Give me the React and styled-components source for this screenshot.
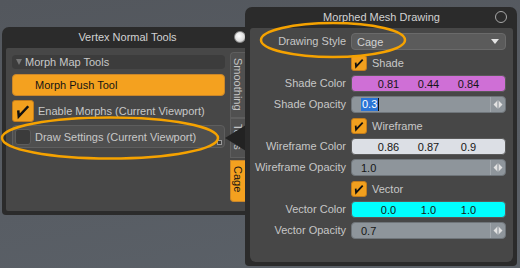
import React from "react";
import styled, { createGlobalStyle } from "styled-components";

const Global = createGlobalStyle`
  body {
    margin: 0;
    font-family: "Liberation Sans", Arial, sans-serif;
    font-size: 11px;
  }
`;

const Desktop = styled.div`
  position: relative;
  width: 520px;
  height: 268px;
  overflow: hidden;
  background: linear-gradient(170deg, #53575d 0%, #585d64 60%, #5b6168 100%);
`;

const Window = styled.div`
  position: absolute;
  left: ${(p) => p.$x}px;
  top: ${(p) => p.$y}px;
  width: ${(p) => p.$w}px;
  height: ${(p) => p.$h}px;
  box-sizing: border-box;
  display: flex;
  flex-direction: column;
  background: #2b2b2b;
  border-radius: 7px 7px 4px 4px;
  padding: 0 ${(p) => p.$pr}px 4px ${(p) => p.$pl}px;
`;

const TitleBar = styled.div`
  position: relative;
  height: 21px;
  flex: none;
  line-height: 21px;
  text-align: center;
  color: #d2d2d2;
  font-size: 11px;
`;

const RadioDot = styled.span`
  position: absolute;
  top: 4px;
  right: ${(p) => p.$right}px;
  width: 12px;
  height: 12px;
  box-sizing: border-box;
  border-radius: 50%;
  background: ${(p) => (p.$filled ? "radial-gradient(circle at 40% 40%, #ffffff, #dcdcdc 60%, #9a9a9a)" : "transparent")};
  border: ${(p) => (p.$filled ? "1px solid #888" : "1.5px solid #a8a8a8")};
`;

const LeftBody = styled.div`
  flex: 1;
  display: flex;
  gap: 5px;
  background: #474747;
  border-radius: 2px;
  padding: 4px 0 0 6px;
`;

const Content = styled.div`
  width: 213px;
  margin-top: 3px;
  display: flex;
  flex-direction: column;
`;

const SectionHeader = styled.div`
  height: 14px;
  display: flex;
  align-items: center;
  gap: 3px;
  padding-left: 4px;
  background: #3c3c3c;
  border-radius: 4px;
  color: #c8c8c8;
  font-size: 11px;
`;

const Caret = styled.span`
  width: 0;
  height: 0;
  border-left: 3.5px solid transparent;
  border-right: 3.5px solid transparent;
  border-top: 6px solid #767676;
`;

const ToolButton = styled.div`
  margin-top: 5px;
  height: 22px;
  box-sizing: border-box;
  display: flex;
  align-items: center;
  padding-left: 22px;
  background: #f4a11f;
  border: 1px solid #c9862a;
  border-radius: 4px;
  color: #141414;
  font-size: 11px;
`;

const CheckRow = styled.div`
  margin-top: ${(p) => p.$mt}px;
  height: ${(p) => p.$h}px;
  box-sizing: border-box;
  display: flex;
  align-items: center;
  gap: 4px;
  color: #c8c8c8;
  font-size: 11px;
  ${(p) =>
    p.$framed &&
    `
    position: relative;
    padding-left: 2px;
    background: #4f4f4f;
    border: 1px solid #5e5e5e;
    border-radius: 4px;
  `}
`;

const Grip = styled.span`
  position: absolute;
  right: 2px;
  bottom: 2px;
  width: 3px;
  height: 3px;
  border: 1px solid #9a9a9a;
  background: #3a3a3a;
`;

const Box = styled.span`
  flex: none;
  width: ${(p) => p.$size}px;
  height: ${(p) => p.$size}px;
  box-sizing: border-box;
  border-radius: 3px;
  display: flex;
  align-items: center;
  justify-content: center;
  background: ${(p) => (p.$on ? "#f2a01e" : "#3b3b3b")};
  border: 1px solid ${(p) => (p.$on ? "#c27c1c" : "#5c5c5c")};
`;

const TabColumn = styled.div`
  width: 15px;
  display: flex;
  flex-direction: column;
`;

const Tab = styled.div`
  height: ${(p) => p.$h}px;
  margin-top: ${(p) => p.$mt || 0}px;
  box-sizing: border-box;
  writing-mode: vertical-rl;
  display: flex;
  align-items: center;
  justify-content: flex-start;
  padding-top: 5px;
  font-size: 11px;
  background: ${(p) => (p.$active ? "#f4a11f" : "#505050")};
  color: ${(p) => (p.$active ? "#141414" : "#c4c4c4")};
  border: 1px solid ${(p) => (p.$active ? "#c9862a" : "#5e5e5e")};
  border-right: none;
  border-radius: ${(p) => p.$radius};
`;

const RightBody = styled.div`
  flex: 1;
  background: #474747;
  border-radius: 3px 3px 6px 6px;
  padding-top: 5px;
  display: grid;
  grid-template-columns: 96px 155px;
  grid-auto-rows: 17px;
  column-gap: 5px;
  row-gap: 4px;
`;

const Label = styled.div`
  text-align: right;
  line-height: 17px;
  color: #c6c6c6;
  font-size: 11px;
  white-space: nowrap;
`;

const Field = styled.div`
  height: 17px;
  box-sizing: border-box;
  border-radius: 4px;
  border: 1px solid ${(p) => p.$border || "#3a3a3a"};
  background: ${(p) => p.$bg};
  display: flex;
  align-items: center;
  color: ${(p) => p.$color || "#161616"};
  font-size: 11px;
  overflow: hidden;
`;

const Select = styled(Field)`
  justify-content: space-between;
  padding: 0 6px 0 5px;
`;

const DropArrow = styled.span`
  width: 0;
  height: 0;
  border-left: 4px solid transparent;
  border-right: 4px solid transparent;
  border-top: 5px solid #e4e4e4;
`;

const Triple = styled(Field)`
  display: grid;
  grid-template-columns: repeat(3, 40px);
  justify-content: center;
  text-align: center;
`;

const Value = styled.div`
  flex: 1;
  padding-left: 9px;
  display: flex;
  align-items: center;
`;

const Selected = styled.span`
  background: #2a74d6;
  color: #ffffff;
  line-height: 13px;
  padding: 0 1px;
`;

const Caret2 = styled.span`
  width: 1px;
  height: 13px;
  background: #111;
`;

const Spinner = styled.div`
  width: 14px;
  height: 100%;
  border-left: 1px solid #a2a8ad;
  display: flex;
  align-items: center;
  justify-content: center;
`;

const CheckField = styled.div`
  display: flex;
  align-items: center;
  gap: 5px;
  color: #c8c8c8;
  font-size: 11px;
`;

const Overlay = styled.svg`
  position: absolute;
  left: 0;
  top: 0;
  pointer-events: none;
`;

const Tick = ({ size }) => (
  <svg width={size} height={size} viewBox="0 0 16 16">
    <path d="M4.2 7.5 L4.6 12.2 L12.2 4.2" fill="none" stroke="#111" strokeWidth="2" strokeLinejoin="miter" />
  </svg>
);

const Check = ({ size = 16, on = true }) => (
  <Box $size={size} $on={on}>
    {on && <Tick size={size - 2} />}
  </Box>
);

const Spin = () => (
  <Spinner>
    <svg width="10" height="9" viewBox="0 0 10 9">
      <path d="M4 1 L0.5 4.5 L4 8 Z M6 1 L9.5 4.5 L6 8 Z" fill="#e2e2e2" />
      <rect x="4.6" y="0.5" width="0.8" height="8" fill="#e2e2e2" />
    </svg>
  </Spinner>
);

const Opacity = ({ value, selected }) => (
  <Field $bg="#8e959b" $border="#6f757a">
    <Value>
      {selected ? (
        <>
          <Selected>{value}</Selected>
          <Caret2 />
        </>
      ) : (
        value
      )}
    </Value>
    <Spin />
  </Field>
);

const Color = ({ bg, values }) => (
  <Triple $bg={bg} $border="#5a5a5a">
    {values.map((v, i) => (
      <span key={i}>{v}</span>
    ))}
  </Triple>
);

export default function App() {
  return (
    <>
      <Global />
      <Desktop>
        <Window $x={2} $y={27} $w={251} $h={188} $pl={4} $pr={4}>
          <TitleBar>
            Vertex Normal Tools
            <RadioDot $filled $right={3} />
          </TitleBar>
          <LeftBody>
            <Content>
              <SectionHeader>
                <Caret />
                Morph Map Tools
              </SectionHeader>
              <ToolButton>Morph Push Tool</ToolButton>
              <CheckRow $mt={4} $h={22}>
                <Check size={22} />
                Enable Morphs (Current Viewport)
              </CheckRow>
              <CheckRow $mt={3} $h={23} $framed>
                <Check size={16} on={false} />
                Draw Settings (Current Viewport)
                <Grip />
              </CheckRow>
            </Content>
            <TabColumn>
              <Tab $h={66} $radius="4px 0 0 0">Smoothing</Tab>
              <Tab $h={40}>Tools</Tab>
              <Tab $h={42} $mt={2} $active $radius="0 0 0 4px">Cage</Tab>
            </TabColumn>
          </LeftBody>
        </Window>

        <Overlay width="520" height="268">
          <polygon points="225,138 246,125 246,151" fill="#222222" />
        </Overlay>

        <Window $x={245} $y={7} $w={272} $h={259} $pl={5} $pr={4}>
          <TitleBar>
            Morphed Mesh Drawing
            <RadioDot $right={6} />
          </TitleBar>
          <RightBody>
            <Label>Drawing Style</Label>
            <Select $bg="#5b5b5b" $border="#6a6a6a" $color="#d2d2d2">
              Cage
              <DropArrow />
            </Select>

            <span />
            <CheckField>
              <Check />
              Shade
            </CheckField>

            <Label>Shade Color</Label>
            <Color bg="#cf6fd6" values={["0.81", "0.44", "0.84"]} />

            <Label>Shade Opacity</Label>
            <Opacity value="0.3" selected />

            <span />
            <CheckField>
              <Check />
              Wireframe
            </CheckField>

            <Label>Wireframe Color</Label>
            <Color bg="#dcdfe5" values={["0.86", "0.87", "0.9"]} />

            <Label>Wireframe Opacity</Label>
            <Opacity value="1.0" />

            <span />
            <CheckField>
              <Check />
              Vector
            </CheckField>

            <Label>Vector Color</Label>
            <Color bg="#00ffff" values={["0.0", "1.0", "1.0"]} />

            <Label>Vector Opacity</Label>
            <Opacity value="0.7" />
          </RightBody>
        </Window>

        <Overlay width="520" height="268">
          <ellipse cx="110" cy="138" rx="108" ry="20.5" fill="none" stroke="#f5a200" strokeWidth="2.5" />
          <ellipse cx="333" cy="40" rx="72" ry="17" fill="none" stroke="#f5a200" strokeWidth="2.5" />
        </Overlay>
      </Desktop>
    </>
  );
}
